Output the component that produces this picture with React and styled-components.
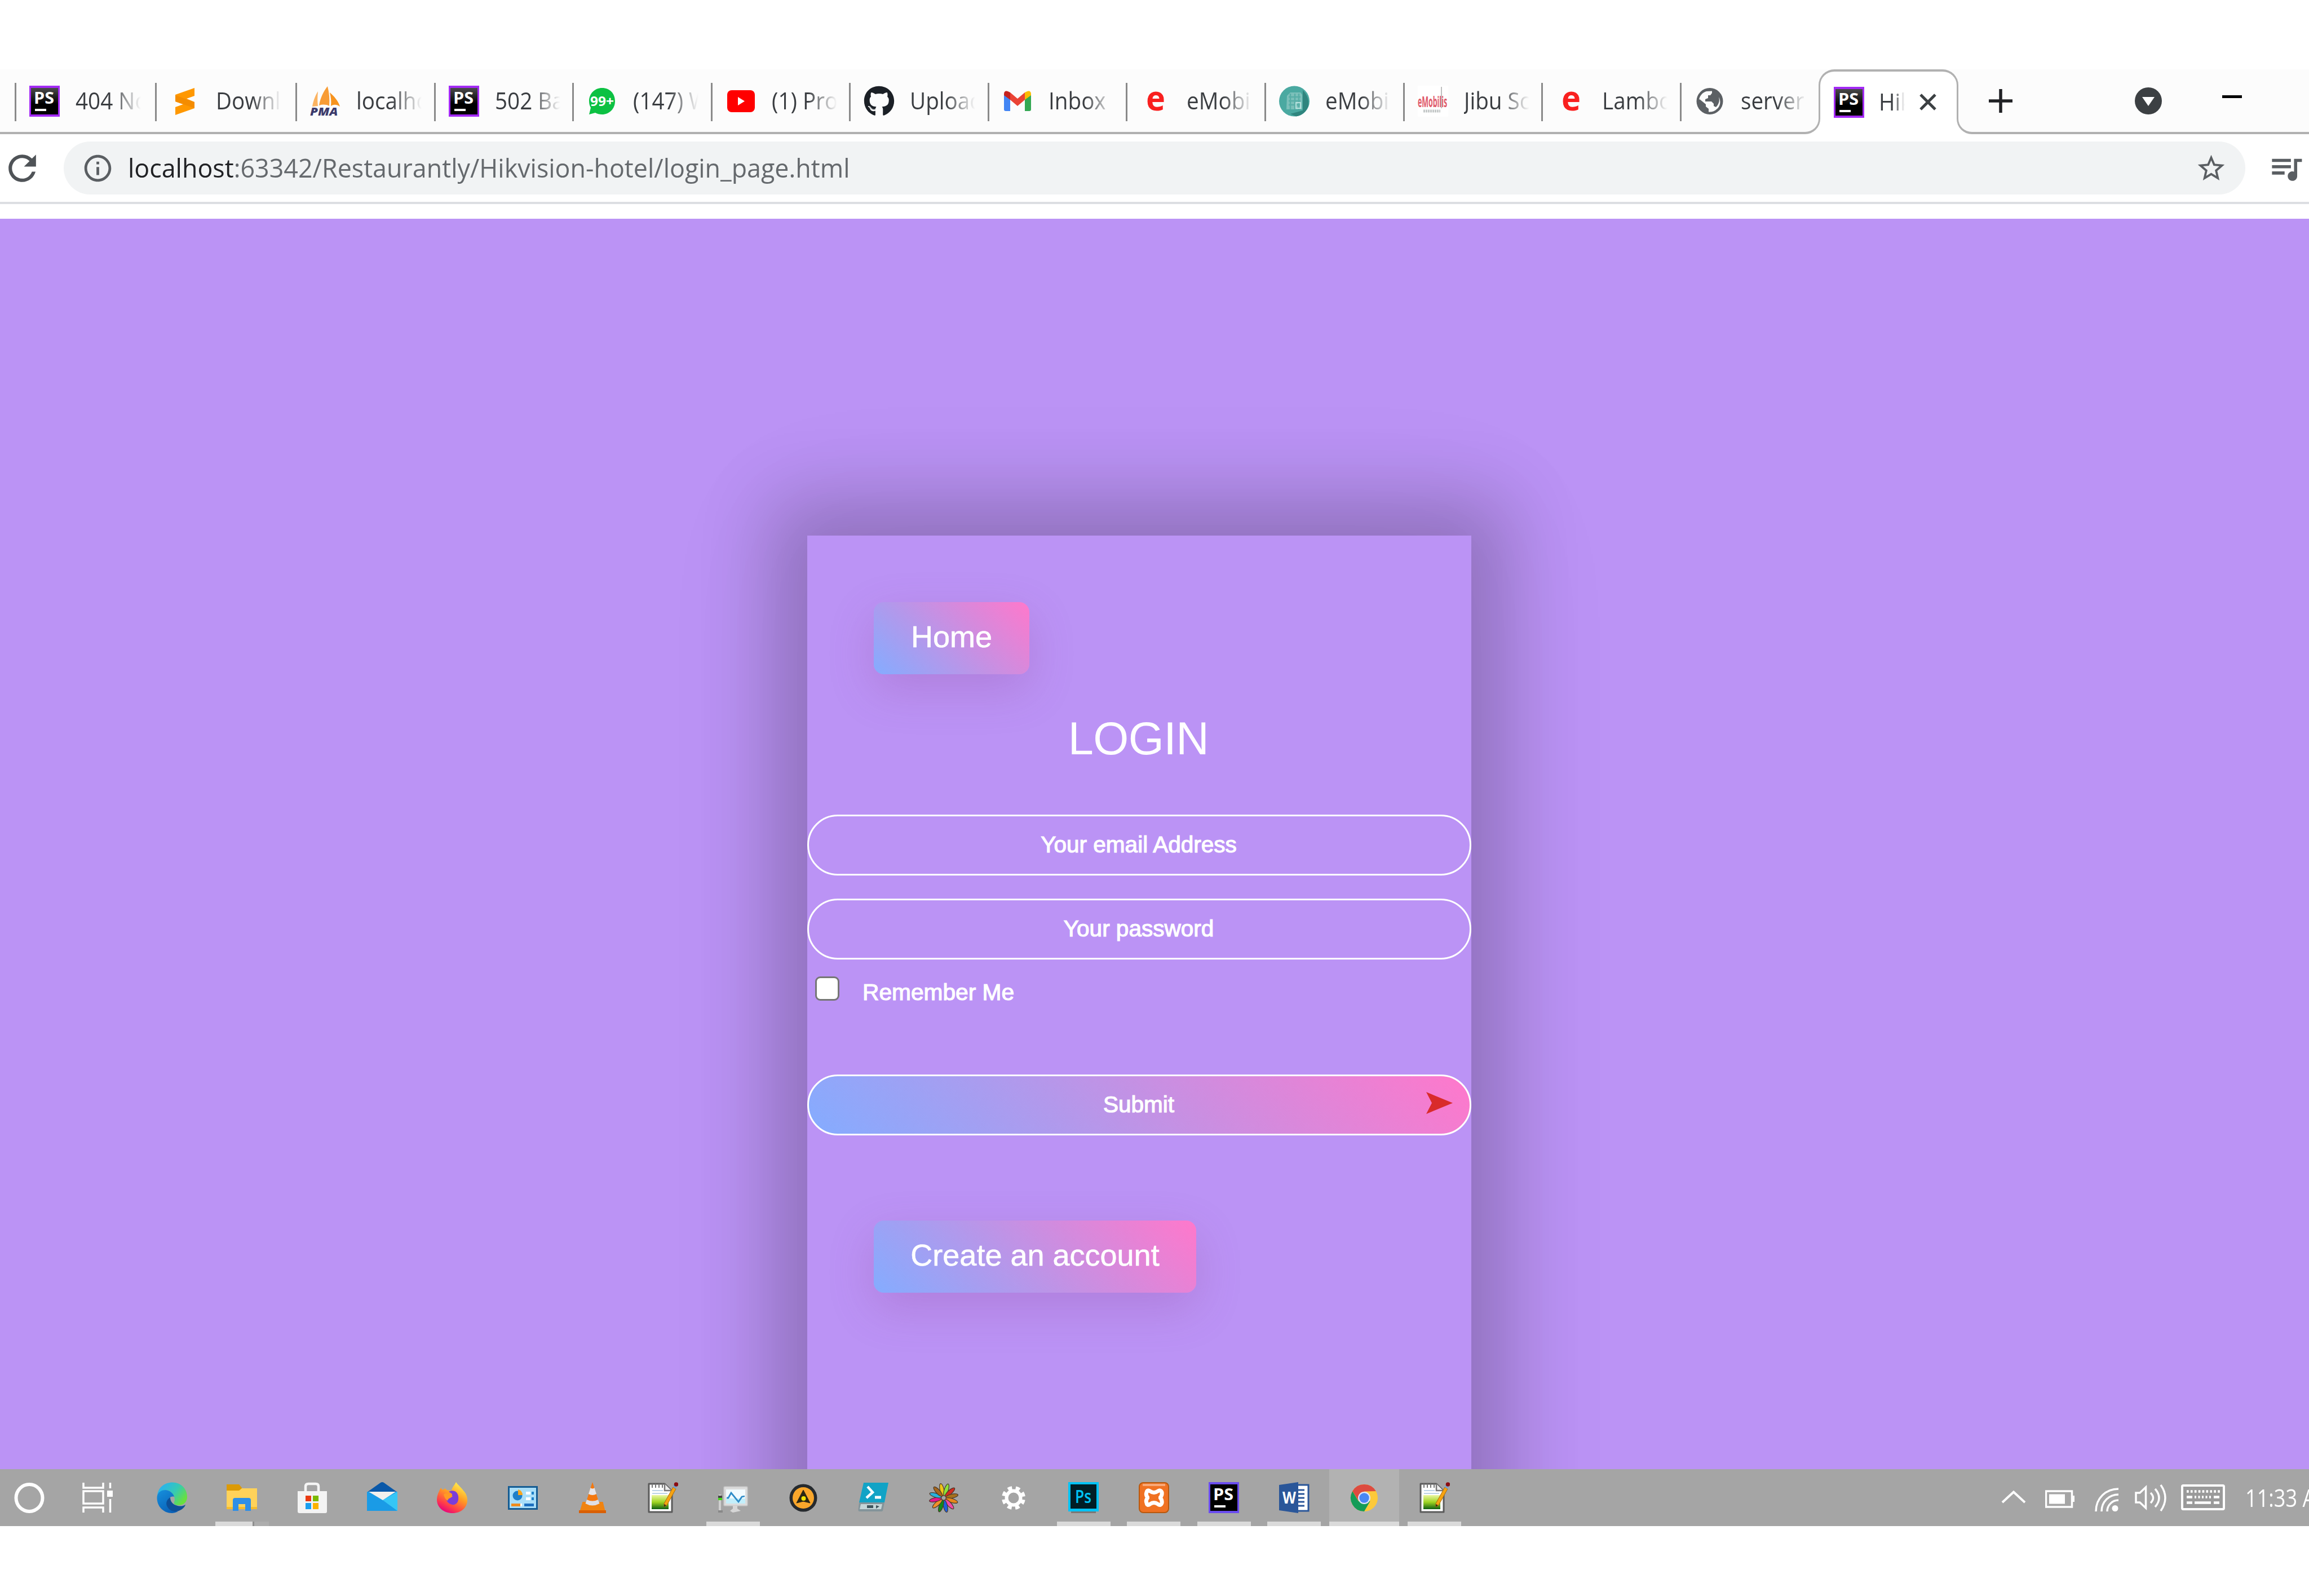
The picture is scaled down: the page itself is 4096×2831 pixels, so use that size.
import React from "react";
import styled, { createGlobalStyle, css } from "styled-components";
import { MdRefresh, MdInfoOutline, MdStarBorder, MdQueueMusic } from "react-icons/md";
import { FaGithub } from "react-icons/fa";

const GlobalStyle = createGlobalStyle`
  html, body { margin: 0; padding: 0; background: #fff; }
  *, *::before, *::after { box-sizing: border-box; }
`;

const UI_FONT = '"Open Sans", "Noto Sans", sans-serif';
const PAGE_FONT = '"Liberation Sans", Arial, sans-serif';

const Screen = styled.div`
  width: 4096px;
  height: 2831px;
  padding-top: 123px;
  overflow: hidden;
  background: #fff;
  display: flex;
  flex-direction: column;
`;

/* ---------- browser chrome ---------- */

const TabStrip = styled.div`
  height: 115px;
  flex: none;
  display: flex;
  padding-left: 25px;
  background: #fcfcfc;
  border-bottom: 4px solid #b1b1b1;
`;

const Tab = styled.div`
  width: ${(p) => p.$w}px;
  flex: none;
  height: 112px;
  display: flex;
  align-items: center;
  padding-left: 25px;
  position: relative;
  &::before {
    content: "";
    position: absolute;
    left: 1px;
    top: 24px;
    width: 3px;
    height: 68px;
    background: #8a8a8a;
  }
`;

const ActiveTab = styled.div`
  width: 248px;
  flex: none;
  height: 115px;
  margin-left: 2px;
  display: flex;
  align-items: center;
  padding: 0 0 3px 24px;
  position: relative;
  z-index: 0;
  background: #fff;
  border: 3px solid #b1b1b1;
  border-top-width: 4px;
  border-bottom: 0;
  border-radius: 28px 28px 0 0;
  &::before,
  &::after {
    content: "";
    position: absolute;
    bottom: 0;
    width: 27px;
    height: 30px;
    background: #fcfcfc;
    border-bottom: 4px solid #b1b1b1;
  }
  &::before {
    left: -27px;
    border-right: 3px solid #b1b1b1;
    border-bottom-right-radius: 27px;
  }
  &::after {
    right: -27px;
    border-left: 3px solid #b1b1b1;
    border-bottom-left-radius: 27px;
  }
`;

const FlareFill = styled.div`
  position: absolute;
  z-index: -1;
  bottom: 0;
  width: 27px;
  height: 30px;
  background: #fff;
  ${(p) => (p.$side === "left" ? "left: -27px;" : "right: -27px;")}
`;

const IconBox = styled.div`
  width: ${(p) => p.$w || 54}px;
  height: ${(p) => p.$h || 55}px;
  flex: none;
  display: flex;
  align-items: center;
  justify-content: center;
  color: ${(p) => p.$color || "#5a5e62"};
  svg { display: block; flex: none; }
`;

const TabTitle = styled.div`
  margin-left: 26px;
  width: ${(p) => p.$w || 116}px;
  overflow: hidden;
  white-space: nowrap;
  margin-top: -3px;
  -webkit-mask-image: linear-gradient(90deg, #000 55%, transparent 100%);
  mask-image: linear-gradient(90deg, #000 55%, transparent 100%);
`;

const Condensed = styled.span`
  display: inline-block;
  flex: none;
  font-family: ${UI_FONT};
  font-size: ${(p) => p.$size}px;
  line-height: 60px;
  color: ${(p) => p.$color || "#3a3d41"};
  white-space: pre;
  transform: scaleX(${(p) => p.$sx});
  transform-origin: left center;
`;

const StripControls = styled.div`
  flex: 1;
  height: 112px;
  display: flex;
  align-items: center;
  padding-left: 54px;
`;
const Gap = styled.div`
  flex: none;
  width: ${(p) => p.$w}px;
`;

const Toolbar = styled.div`
  height: 124px;
  flex: none;
  display: flex;
  align-items: center;
  background: #fff;
  border-bottom: 4px solid #dcdee2;
  padding-left: 3px;
`;

const Omnibox = styled.div`
  width: 3870px;
  height: 94px;
  flex: none;
  margin-left: 37px;
  border-radius: 47px;
  background: #f1f3f4;
  display: flex;
  align-items: center;
  justify-content: space-between;
  padding: 0 32px;
`;

const Address = styled.div`
  display: flex;
  align-items: center;
  gap: 25px;
`;

const AddressText = styled.div`
  margin-top: -2px;
`;

const Host = styled.span`
  color: #202124;
`;

const BookmarksGap = styled.div`
  height: 26px;
  flex: none;
`;

/* ---------- page ---------- */

const Page = styled.main`
  height: 2218px;
  flex: none;
  overflow: hidden;
  background: #bb93f5;
  padding: 562px 0 0 1432px;
  font-family: ${PAGE_FONT};
  color: #fff;
`;

const Card = styled.section`
  width: 1178px;
  height: 2000px;
  padding-top: 118px;
  background: #bb93f5;
  box-shadow: 0 0 120px 64px rgba(0, 0, 0, 0.19), 0 0 220px 60px rgba(0, 0, 0, 0.055);
  display: flex;
  flex-direction: column;
  align-items: flex-start;
`;

const GradientButton = styled.a`
  margin: ${(p) => p.$top || 0}px 0 0 118px;
  width: ${(p) => p.$w}px;
  height: 128px;
  padding-bottom: 6px;
  border-radius: 18px;
  background: linear-gradient(45deg, #84acff, #ff78cb);
  box-shadow: 0 27px 80px rgba(140, 60, 140, 0.23);
  display: flex;
  align-items: center;
  justify-content: center;
  font-size: 54px;
  -webkit-text-stroke: 0.6px #fff;
`;

const Heading = styled.h1`
  margin: 69px 0 0;
  width: 100%;
  padding-right: 3px;
  text-align: center;
  font-weight: 400;
  font-size: 81px;
  line-height: 90px;
  letter-spacing: -0.5px;
`;

const pill = css`
  width: 100%;
  height: 108px;
  border: 3.5px solid #fff;
  border-radius: 54px;
  display: flex;
  align-items: center;
  justify-content: center;
  font-size: 40.5px;
  padding: 0 2px 2px 0;
  -webkit-text-stroke: 1.2px #fff;
`;

const Field = styled.div`
  ${pill}
  margin-top: ${(p) => p.$top}px;
`;

const Submit = styled.div`
  ${pill}
  margin-top: 117px;
  position: relative;
  background: linear-gradient(45deg, #84acff, #ff78cb);
  svg {
    position: absolute;
    right: 30px;
    top: 28px;
  }
`;

const Remember = styled.label`
  height: 57px;
  margin: 30px 0 0 14px;
  display: flex;
  align-items: center;
  font-size: 40.7px;
  -webkit-text-stroke: 1.2px #fff;
`;

const Check = styled.span`
  width: 43px;
  height: 43px;
  margin: 0 41px 14px 0;
  background: #fff;
  border: 3px solid #767676;
  border-radius: 9px;
`;

/* ---------- taskbar ---------- */

const Taskbar = styled.footer`
  height: 101px;
  flex: none;
  display: flex;
  background: #a5a5a5;
  overflow: hidden;
`;

const Slot = styled.div`
  width: ${(p) => p.$w || 124.45}px;
  flex: none;
  height: 101px;
  display: flex;
  flex-direction: column;
  align-items: center;
  justify-content: space-between;
  padding-top: 23px;
`;

const ActiveSlot = styled(Slot)`
  background: #b2b2b2;
  padding-top: 0;
  & > :first-child { margin-top: 23px; }
`;

const Running = styled.div`
  width: ${(p) => p.$w || 95}px;
  height: 8px;
  background: #dadada;
`;

const RunningGroup = styled.div`
  width: 95px;
  height: 8px;
  background: linear-gradient(90deg, #dadada 66px, #8e8e8e 66px 69px, #adadad 69px);
`;

const Tray = styled.div`
  margin-left: auto;
  width: 546px;
  flex: none;
  display: flex;
  align-items: flex-start;
  padding-top: 21px;
  & > svg { flex: none; }
`;

/* ---------- icons ---------- */

const Art = ({ w = 54, h = 55, vb = "0 0 54 55", children }) => (
  <svg width={w} height={h} viewBox={vb} preserveAspectRatio="none">{children}</svg>
);

const StormIcon = ({ edge = "#a32af5", top = "#4a4a4a", id }) => (
  <Art>
    <defs>
      <linearGradient id={id} x1="0" y1="0" x2="0" y2="1">
        <stop offset="0" stopColor={top} />
        <stop offset="0.6" stopColor="#000" />
      </linearGradient>
    </defs>
    <rect width="54" height="55" fill={edge} />
    <rect x="3" y="4" width="48" height="47" fill={`url(#${id})`} />
    <text x="8" y="32" fontFamily="Open Sans, sans-serif" fontWeight="700" fontSize="29" textLength="36" lengthAdjust="spacingAndGlyphs" fill="#fff">PS</text>
    <rect x="10" y="41" width="20" height="4" fill="#fff" />
  </Art>
);

const SublimeIcon = () => (
  <Art>
    <path d="M10 16 L44 4 V18 L30 23 L44 29 V40 L10 52 V38 L24 33 L10 28 Z" fill="#ff9800" />
    <path d="M10 17 L44 29 V40 L30 35 L10 28 Z" fill="#f48c00" />
  </Art>
);

const PmaIcon = () => (
  <Art>
    <path d="M4 37 C6 26 9 18 14 10 C13 20 13 29 14 36 Z" fill="#fbb361" />
    <path d="M16 35 C18 22 24 10 31 1 C34 12 35 24 34 36 C28 33 22 33 16 35 Z" fill="#f89c35" />
    <path d="M35 12 C43 19 50 27 53 37 C47 33 42 33 37 36 C38 28 37 20 35 12 Z" fill="#f7931e" />
    <text transform="translate(0 53) scale(1.12 1)" x="0" y="0" fontFamily="Open Sans, sans-serif" fontWeight="800" fontStyle="italic" fontSize="20" fill="#3b3a6b">PMA</text>
  </Art>
);

const WhatsappIcon = () => (
  <Art>
    <path d="M27 4 C41 4 50 14 50 27.500 C50 41 40 51 27 51 C23 51 18 50 15 48 L4 51 L7 39 C5 36 4 32 4 27.500 C4 14 14 4 27 4 Z" fill="#0cc143" />
    <text x="6" y="36" fontFamily="Open Sans, sans-serif" fontWeight="700" fontSize="24" textLength="42" lengthAdjust="spacingAndGlyphs" fill="#fff">99+</text>
  </Art>
);

const YoutubeIcon = () => (
  <Art>
    <rect x="3" y="8" width="49" height="39" rx="8" fill="#f00" />
    <path d="M22 20 L34 27.500 L22 35 Z" fill="#fff" />
  </Art>
);

const GmailIcon = () => (
  <Art>
    <path d="M3 15 V42 Q3 45 6 45 H14 V23 Z" fill="#4285f4" />
    <path d="M51 15 V42 Q51 45 48 45 H40 V23 Z" fill="#34a853" />
    <path d="M14 12 L27 23 L40 12 V25 L27 36 L14 25 Z" fill="#ea4335" />
    <path d="M3 15 Q3 9 8 9.500 Q11 10 14 12 V25 L3 17 Z" fill="#c5221f" />
    <path d="M51 15 Q51 9 46 9.500 Q43 10 40 12 V25 L51 17 Z" fill="#fbbc04" />
  </Art>
);

const EIcon = () => (
  <Art>
    <text x="10" y="44" fontFamily="Open Sans, sans-serif" fontWeight="700" fontSize="61" textLength="34" lengthAdjust="spacingAndGlyphs" fill="#f9201f">e</text>
  </Art>
);

const TealIcon = () => (
  <Art>
    <circle cx="27" cy="27.500" r="27" fill="#4aa9a1" />
    <path d="M42 8 Q54 20 52 36 Q46 52 30 54.500 L20 50 L42 44 Z" fill="#2f857e" />
    <path d="M14 18 L20 12 H38 L41 16 V42 H13 Z" fill="#7cc0ba" />
    <path d="M17 20 H38 M17 27 H38 M17 34 H38 M20 14 V42 M28 14 V42 M35 14 V42" stroke="#58aea7" strokeWidth="2.500" />
    <path d="M30 30 h8 v10 h-8z" fill="none" stroke="#b5e0dc" strokeWidth="2" />
  </Art>
);

const MobilisIcon = () => (
  <Art>
    <rect width="54" height="55" fill="#fff" />
    <text transform="translate(0 38) scale(0.46 1)" x="0" y="0" fontFamily="Open Sans, sans-serif" fontWeight="700" fontSize="27" fill="#df5a6a">eMobilis</text>
    <path d="M42 2 V40" stroke="#aaa" strokeWidth="1.500" />
    <path d="M10 45 H40" stroke="#c4c8c8" strokeWidth="5" strokeDasharray="3 1" />
  </Art>
);

const GlobeIcon = () => (
  <Art>
    <circle cx="27" cy="27.500" r="23.500" fill="#5c6064" />
    <path d="M8 25 C9 18 14 12 21 10 L31 9.500 V13 L28 17 H24 V22 L19 24 V28 H30 L34 32 V36 L38 38 C43 33 45 27 43 20 C47 27 46 36 40 41 C36 45 31 47 25 46.500 V41 L20 37 V33 L9 24 Z" fill="#fcfcfc" />
  </Art>
);

const TaskViewIcon = () => (
  <Art>
    <g fill="none" stroke="#fff" strokeWidth="3.500">
      <path d="M2 1 V10 H37 V1 M2 54 V45 H37 V54" />
      <rect x="2" y="16" width="35" height="22" />
      <path d="M49.500 1 V11 M49.500 30 V54" />
    </g>
    <rect x="44" y="15" width="10" height="11" fill="#fff" />
  </Art>
);

const EdgeIcon = () => (
  <Art>
    <defs>
      <linearGradient id="edgeA" x1="0" y1="0" x2="1" y2="0.600">
        <stop offset="0.200" stopColor="#2bb5e8" />
        <stop offset="0.600" stopColor="#35c9b6" />
        <stop offset="1" stopColor="#68e03e" />
      </linearGradient>
      <linearGradient id="edgeB" x1="0" y1="0" x2="0.600" y2="1">
        <stop offset="0" stopColor="#1690dd" />
        <stop offset="1" stopColor="#0a62b8" />
      </linearGradient>
    </defs>
    <path d="M1 23 C3 9 14 0.500 28 0.500 C43 0.500 54 12 54 26 C54 36 47 41 39 41 C33 41 29 39 31 35 C34 30 30 17 18 14 C10 14 3 18 1 23 Z" fill="url(#edgeA)" />
    <path d="M0.500 27 C1 18 8 14 15 14 C24 14 30 21 31 26 C25 24 20 29 20 35 C20 44 28 51 38 52 C34 54 30 55 27 55 C12 55 0 43 0.500 27 Z" fill="url(#edgeB)" />
    <path d="M24 27 C18 31 15 37 19 44 C23 51 31 54 39 51 C45 49 50 44 51 40 C46 43 42 43 37 42 C29 40 24 35 24 27 Z" fill="#0e4f97" />
  </Art>
);

const ExplorerIcon = () => (
  <Art>
    <path d="M0 4 H22 L27 10 V16 H0 Z" fill="#dc9a06" />
    <path d="M0 15 H22 L27 11 H54 V48 H0 Z" fill="#ffd25a" />
    <rect y="44" width="54" height="4" fill="#f6bd2c" />
    <path d="M11 51 V32 Q11 28 15 28 H39 Q43 28 43 32 V51 H33 V39 H21 V51 Z" fill="#2f8fe6" />
  </Art>
);

const StoreIcon = () => (
  <Art>
    <path d="M15 20 V8 Q15 3 20 3 H33 Q38 3 38 8 V20" fill="none" stroke="#f5f5f5" strokeWidth="4.500" />
    <path d="M1 16 H53 V52 Q53 55 50 55 H4 Q1 55 1 52 Z" fill="#f3f3f3" />
    <rect x="15" y="24" width="10" height="10" fill="#ea3b12" />
    <rect x="28" y="24" width="10" height="10" fill="#7bb900" />
    <rect x="15" y="37" width="10" height="11" fill="#1a9ff0" />
    <rect x="28" y="37" width="10" height="11" fill="#fbb300" />
  </Art>
);

const MailIcon = () => (
  <Art>
    <path d="M0 18 L24 1 Q27 -1 30 1 L54 18 Z" fill="#0a58a8" />
    <path d="M0 17 H54 V51 H0 Z" fill="#1a9be6" />
    <path d="M54 17 V51 L28 32 Z" fill="#35c6f6" />
    <path d="M3 17 H51 L28 32 Z" fill="#f3f1ee" />
  </Art>
);

const FirefoxIcon = () => (
  <Art>
    <defs>
      <linearGradient id="fox" x1="0.800" y1="0.100" x2="0.300" y2="1">
        <stop offset="0" stopColor="#ffe94a" />
        <stop offset="0.400" stopColor="#ff9a24" />
        <stop offset="0.750" stopColor="#ff3f48" />
        <stop offset="1" stopColor="#e5007f" />
      </linearGradient>
    </defs>
    <path d="M34 0 C38 6 44 10 47 15 C52 20 54 26 54 32 C54 46 42 55 28 55 C12 55 0 45 0 31 C0 24 3 17 7 10 L10 14 L15 11 C16 14 20 15 26 15 C27 9 31 6 34 0 Z" fill="url(#fox)" />
    <path d="M21 17 C30 12 40 18 38 31 C37 39 30 42 24 39 C17 36 15 29 18 25 C22 27 28 26 27 21 Z" fill="#7a3ddb" />
    <path d="M12 22 C17 18 22 21 28 25 C24 29 20 28 19 33 C16 31 13 27 12 22 Z" fill="#ff9a24" />
  </Art>
);

const PanelIcon = () => (
  <Art>
    <rect x="1" y="7" width="53" height="42" fill="#155c93" />
    <rect x="4" y="10" width="47" height="36" fill="#a9def8" />
    <circle cx="18" cy="24" r="8.500" fill="#1d7fc9" />
    <path d="M19 23 V13 A10 10 0 0 1 27 23 Z" fill="#f6a51e" />
    <path d="M33 17 h8 v5 h-8z M33 27 h8 v5 h-8z" fill="#fff" />
    <path d="M43 17 h4 v5 h-4z M43 27 h4 v5 h-4z" fill="#1d7fc9" />
    <path d="M7 38 h16 v5 H7z" fill="#f08c1c" />
    <path d="M30 38 h17 v5 H30z" fill="#1d6fc0" />
    <path d="M23 38 h3 v5 h-3z" fill="#fff" />
  </Art>
);

const VlcIcon = () => (
  <Art>
    <path d="M9 35 H45 L50 55 H3 Z" fill="#f08310" transform="translate(0.500 0)" />
    <path d="M3 50 H51 V55 H3 Z" fill="#d95f05" />
    <path d="M27 0 L31 12 L39 38 Q27 45 15 38 L23 12 Z" fill="#f4780f" />
    <path d="M23.500 10 Q27 13 30.500 10 L34 21 Q27 25 20 21 Z" fill="#e6e6ea" />
    <path d="M17 31 Q27 36 37 31 L39.500 38 Q27 45 14.500 38 Z" fill="#dfdfe4" />
  </Art>
);

const NotepadIcon = ({ id }) => (
  <Art>
    <defs>
      <linearGradient id={id} x1="0" y1="0" x2="0" y2="1">
        <stop offset="0" stopColor="#eaf6a0" />
        <stop offset="0.500" stopColor="#9fd522" />
        <stop offset="1" stopColor="#0f5f12" />
      </linearGradient>
    </defs>
    <path d="M2 3 H30 L43 16 V53 H2 Z" fill="#fff" stroke="#5b5b5b" strokeWidth="3" strokeLinejoin="round" />
    <path d="M30 3 V15 H42" fill="#eee" stroke="#777" strokeWidth="2.500" />
    <path d="M8 3 V10 M14 3 V10 M20 3 V10 M26 3 V10" stroke="#777" strokeWidth="2" />
    <path d="M8 15 H27 M8 20 H35" stroke="#bcd3e6" strokeWidth="2" />
    <rect x="7" y="23" width="30" height="25" fill={`url(#${id})`} />
    <path d="M45 9 L50 12 L34 41 L29 44 L29 38 Z" fill="#f6a311" stroke="#a96a0a" strokeWidth="1" />
    <path d="M46 5 L52 8 L50 12 L45 9 Z" fill="#7aa0c8" />
    <circle cx="50.500" cy="4" r="3.800" fill="#8b0d12" />
    <path d="M29 44 L29 39 L33 41 Z" fill="#3b2a1a" />
  </Art>
);

const MonitorIcon = () => (
  <Art>
    <rect x="11" y="8" width="42" height="34" rx="2" fill="#dcdcdc" stroke="#c4c4c4" strokeWidth="1.500" />
    <rect x="15" y="13" width="34" height="25" fill="#f2fbff" />
    <rect x="15" y="29" width="34" height="9" fill="#c3eefa" />
    <path d="M16 28 H19 L24 19 L37 35 L43 26 L48 25" fill="none" stroke="#2f8cc8" strokeWidth="2.800" />
    <path d="M27 42 H35 V47 L41 51 L27 54 L22 51 L27 47 Z" fill="#d6d6d6" />
    <rect x="2" y="22" width="4" height="30" fill="#cfcfcf" />
    <rect x="1" y="24" width="7" height="4" fill="#444" />
    <rect x="1" y="28" width="7" height="4" fill="#47d51d" />
    <rect x="1" y="50" width="8" height="4" fill="#888" />
  </Art>
);

const AimpIcon = () => (
  <Art>
    <circle cx="27" cy="28" r="24.500" fill="#262a2e" />
    <circle cx="27" cy="28" r="19" fill="#f9a62b" />
    <path d="M27 14 L39 37 L27 34 L15 37 Z" fill="#2b2714" stroke="#2b2714" strokeWidth="1" strokeLinejoin="round" />
    <circle cx="27.500" cy="29" r="4" fill="#f2e500" />
  </Art>
);

const PowershellIcon = () => (
  <Art>
    <path d="M10 1 H54 L47 36 H2 Z" fill="#12a3c6" />
    <path d="M2 36 H47 L44 51 Q43 52 41 52 H3 Q0 52 0.500 49 Z" fill="#83949a" />
    <path d="M5 39 H43 L41 48 H3 Z" fill="#c5d6d8" />
    <path d="M16 41 H27 V46 H16 Z M32 41 L38 43 L32 47 Z" fill="#3f555c" />
    <path d="M17 8 L26 18 L15 28" fill="none" stroke="#fff" strokeWidth="4.500" />
    <path d="M30 27 H41" stroke="#fff" strokeWidth="5" />
  </Art>
);

const petals = ["#f0c419", "#8be33a", "#d22b1f", "#a5701c", "#e8881a", "#f24aa7", "#1d5fe0", "#128a1a", "#f0902a", "#e6178b", "#28b3dc", "#a8671b"];
const FlowerIcon = () => (
  <Art>
    {petals.map((c, i) => (
      <ellipse key={i} cx="27" cy="13" rx="3.600" ry="11" fill={c} stroke="#4b3a2a" strokeWidth="1.200" transform={`rotate(${i * 30 - 12} 27 28)`} />
    ))}
  </Art>
);

const GearIcon = () => (
  <Art>
    <circle cx="27" cy="28" r="12.500" fill="none" stroke="#fff" strokeWidth="6" />
    <circle cx="27" cy="28" r="18" fill="none" stroke="#fff" strokeWidth="6" strokeDasharray="7.500 6.637" strokeDashoffset="-3.300" />
  </Art>
);

const PhotoshopIcon = () => (
  <Art>
    <rect x="5" y="50" width="44" height="5" fill="#7c7775" />
    <rect width="54" height="52" fill="#00c3f7" />
    <rect x="4" y="4" width="46" height="43" fill="#011e26" />
    <text x="12" y="37" fontFamily="Open Sans, sans-serif" fontSize="33" fontWeight="600" textLength="29" lengthAdjust="spacingAndGlyphs" fill="#00c3f7">Ps</text>
  </Art>
);

const XamppIcon = () => (
  <Art>
    <rect x="1" y="1" width="52" height="53" rx="7" fill="#f07223" stroke="#b8590f" strokeWidth="2" />
    <rect x="7" y="3" width="40" height="4" fill="#f7a878" />
    <path d="M14 18 Q15 13 20 16 Q27 21 34 16 Q39 13 41 18 Q42 23 38 27.500 Q42 32 41 37 Q39 43 34 39 Q27 34 20 39 Q15 43 14 37 Q12 32 16 27.500 Q12 23 14 18 Z" fill="none" stroke="#fff" strokeWidth="7" strokeLinejoin="round" />
    <path d="M19 27.500 H35" stroke="#f07223" strokeWidth="5" />
  </Art>
);

const WordIcon = () => (
  <Art>
    <rect x="30" y="5" width="22" height="46" fill="#fff" stroke="#2a5699" strokeWidth="3" />
    <path d="M32 14 H45 M32 21 H45 M32 28 H45 M32 35 H45 M32 42 H45" stroke="#2a5699" strokeWidth="3" />
    <path d="M0 5 L34 0 V55 L0 50 Z" fill="#2a5699" />
    <text x="6" y="38" fontFamily="Open Sans, sans-serif" fontSize="29" fontWeight="700" textLength="24" lengthAdjust="spacingAndGlyphs" fill="#fff">W</text>
  </Art>
);

const ChromeIcon = () => (
  <Art>
    <circle cx="27" cy="28" r="24" fill="#fdc93a" />
    <path d="M6.200 16 A24 24 0 0 0 27 52 L37.400 34 L27 28 L17 34 Z" fill="#149c58" />
    <path d="M6.200 16 A24 24 0 0 1 47.800 16 L27 16.500 L17 33 Z" fill="#dd4b40" />
    <circle cx="27" cy="28" r="11" fill="#dfe6fa" />
    <circle cx="27" cy="28" r="8.700" fill="#4a87f5" />
  </Art>
);

const Chevron = () => (
  <Art w={44} vb="0 0 44 55">
    <path d="M2 38 L22 19.500 L42 38" fill="none" stroke="#fff" strokeWidth="4" />
  </Art>
);
const Battery = () => (
  <Art w={52} vb="0 0 52 55">
    <rect x="1.500" y="18" width="46" height="28" fill="none" stroke="#fff" strokeWidth="3.500" />
    <rect x="7" y="23.500" width="28" height="17" fill="#fff" />
    <rect x="48" y="26" width="4" height="11" fill="#fff" />
  </Art>
);
const Wifi = () => (
  <Art w={42} vb="0 0 42 55">
    <g fill="none" stroke="#fff" strokeWidth="3.500">
      <path d="M2 54 C2 30 20 14 42 14" />
      <path d="M12 54 C12 36 26 24 42 24" />
      <path d="M22 54 C22 43 31 34 42 34" />
    </g>
    <circle cx="36" cy="48.500" r="5.500" fill="#fff" />
  </Art>
);
const Speaker = () => (
  <Art w={57} vb="0 0 57 55">
    <g fill="none" stroke="#fff" strokeWidth="3.500">
      <path d="M2 21 H9 L19.500 11 V48 L9 38 H2 Z" />
      <path d="M28 21 Q37 30 28 39" />
      <path d="M36 14 Q50 30 36 46" />
      <path d="M46 7 Q62 30 46 53" />
    </g>
  </Art>
);
const Keyboard = () => (
  <Art w={78} vb="0 0 78 55">
    <rect x="2" y="8" width="74" height="42" rx="2" fill="#9a9a9a" stroke="#fff" strokeWidth="4" />
    <g stroke="#fff" strokeWidth="4.500" fill="none">
      <path d="M10 18.500 H69" strokeDasharray="3.700 3.200" />
      <path d="M10 28.500 H20 M24 28.500 h3 M30.500 28.500 h3 M37 28.500 h3 M43.500 28.500 h3 M50 28.500 h3 M58 28.500 H68" />
      <path d="M10 38.500 H20 M24 38.500 H53 M58 38.500 H68" />
    </g>
  </Art>
);

/* ---------- data ---------- */

const tabs = [
  { title: "404 No", w: 248.5, icon: <StormIcon id="st1" /> },
  { title: "Downl", w: 249, icon: <SublimeIcon /> },
  { title: "localho", w: 246, icon: <PmaIcon /> },
  { title: "502 Ba", w: 245.6, icon: <StormIcon id="st2" /> },
  { title: "(147) W", w: 245.6, icon: <WhatsappIcon /> },
  { title: "(1) Pro", w: 245.6, icon: <YoutubeIcon /> },
  { title: "Upload", w: 245.6, icon: <FaGithub size={55} color="#1b2026" /> },
  { title: "Inbox", w: 245.6, icon: <GmailIcon /> },
  { title: "eMobi", w: 245.6, icon: <EIcon /> },
  { title: "eMobi", w: 245.6, icon: <TealIcon /> },
  { title: "Jibu Sc", w: 245.6, icon: <MobilisIcon /> },
  { title: "Lambo", w: 246, icon: <EIcon /> },
  { title: "server.", w: 245, icon: <GlobeIcon /> },
];

const apps = [
  { icon: <EdgeIcon /> },
  { icon: <ExplorerIcon />, group: true },
  { icon: <StoreIcon /> },
  { icon: <MailIcon /> },
  { icon: <FirefoxIcon /> },
  { icon: <PanelIcon /> },
  { icon: <VlcIcon /> },
  { icon: <NotepadIcon id="np1" /> },
  { icon: <MonitorIcon />, running: true },
  { icon: <AimpIcon /> },
  { icon: <PowershellIcon /> },
  { icon: <FlowerIcon /> },
  { icon: <GearIcon /> },
  { icon: <PhotoshopIcon />, running: true },
  { icon: <XamppIcon />, running: true },
  { icon: <StormIcon id="st4" edge="#6a4cf0" top="#000" />, running: true },
  { icon: <WordIcon />, running: true },
  { icon: <ChromeIcon />, active: true },
  { icon: <NotepadIcon id="np2" />, running: true },
];

export default function App() {
  return (
    <Screen>
      <GlobalStyle />
      <TabStrip>
        {tabs.map((t, i) => (
          <Tab key={i} $w={t.w}>
            <IconBox $w={58}>{t.icon}</IconBox>
            <TabTitle>
              <Condensed $size={42} $sx={0.92}>{t.title}</Condensed>
            </TabTitle>
          </Tab>
        ))}
        <ActiveTab>
          <FlareFill $side="left" />
          <FlareFill $side="right" />
          <IconBox><StormIcon id="st3" /></IconBox>
          <TabTitle $w={46}>
            <Condensed $size={42} $sx={0.92}>Hik</Condensed>
          </TabTitle>
          <Gap $w={26} />
          <Art w={30} h={30} vb="0 0 30 30">
            <path d="M2 2 L28 28 M28 2 L2 28" stroke="#3c4043" strokeWidth="5" />
          </Art>
        </ActiveTab>
        <StripControls>
          <Art w={42} h={42} vb="0 0 42 42">
            <path d="M21 0 V42 M0 21 H42" stroke="#202124" strokeWidth="5.500" />
          </Art>
          <Gap $w={217} />
          <Art w={48} h={48} vb="0 0 48 48">
            <circle cx="24" cy="24" r="24" fill="#3c4043" />
            <path d="M13 17 H35 L24 33 Z" fill="#fff" />
          </Art>
          <Gap $w={107} />
          <Art w={35} h={20} vb="0 0 35 20">
            <rect y="0" width="35" height="5" fill="#000" />
          </Art>
        </StripControls>
      </TabStrip>

      <Toolbar>
        <IconBox $w={73} $h={73} $color="#4f5357"><MdRefresh size={73} /></IconBox>
        <Omnibox>
          <Address>
            <IconBox $w={57} $h={57}><MdInfoOutline size={57} /></IconBox>
            <AddressText>
              <Condensed $size={46} $sx={0.974} $color="#65696d">
                <Host>localhost</Host>:63342/Restaurantly/Hikvision-hotel/login_page.html
              </Condensed>
            </AddressText>
          </Address>
          <IconBox $w={57} $h={57}><MdStarBorder size={57} /></IconBox>
        </Omnibox>
        <Gap $w={39} />
        <IconBox $w={67} $h={67}><MdQueueMusic size={67} /></IconBox>
      </Toolbar>
      <BookmarksGap />

      <Page>
        <Card>
          <GradientButton $w={276}>Home</GradientButton>
          <Heading>LOGIN</Heading>
          <Field $top={90}>Your email Address</Field>
          <Field $top={41}>Your password</Field>
          <Remember><Check />Remember Me</Remember>
          <Submit>
            Submit
            <svg width="47" height="39" viewBox="0 0 47 39">
              <path d="M0 0 L47 19.500 L0 39 L10 19.500 Z" fill="#d92b2b" />
            </svg>
          </Submit>
          <GradientButton $w={572} $top={151}>Create an account</GradientButton>
        </Card>
      </Page>

      <Taskbar>
        <Slot $w={104}>
          <Art><ellipse cx="27" cy="28" rx="23.500" ry="24" fill="none" stroke="#fff" strokeWidth="6" /></Art>
        </Slot>
        <Slot $w={138.5}><TaskViewIcon /></Slot>
        {apps.map((a, i) =>
          a.active ? (
            <ActiveSlot key={i}>{a.icon}<Running $w={124} /></ActiveSlot>
          ) : (
            <Slot key={i}>
              {a.icon}
              {a.running && <Running />}
              {a.group && <RunningGroup />}
            </Slot>
          )
        )}
        <Tray>
          <Chevron />
          <Gap $w={34} />
          <Battery />
          <Gap $w={36} />
          <Wifi />
          <Gap $w={29} />
          <Speaker />
          <Gap $w={25} />
          <Keyboard />
          <Gap $w={36} />
          <Condensed $size={43} $sx={0.84} $color="#fff">11:33 A</Condensed>
        </Tray>
      </Taskbar>
    </Screen>
  );
}
